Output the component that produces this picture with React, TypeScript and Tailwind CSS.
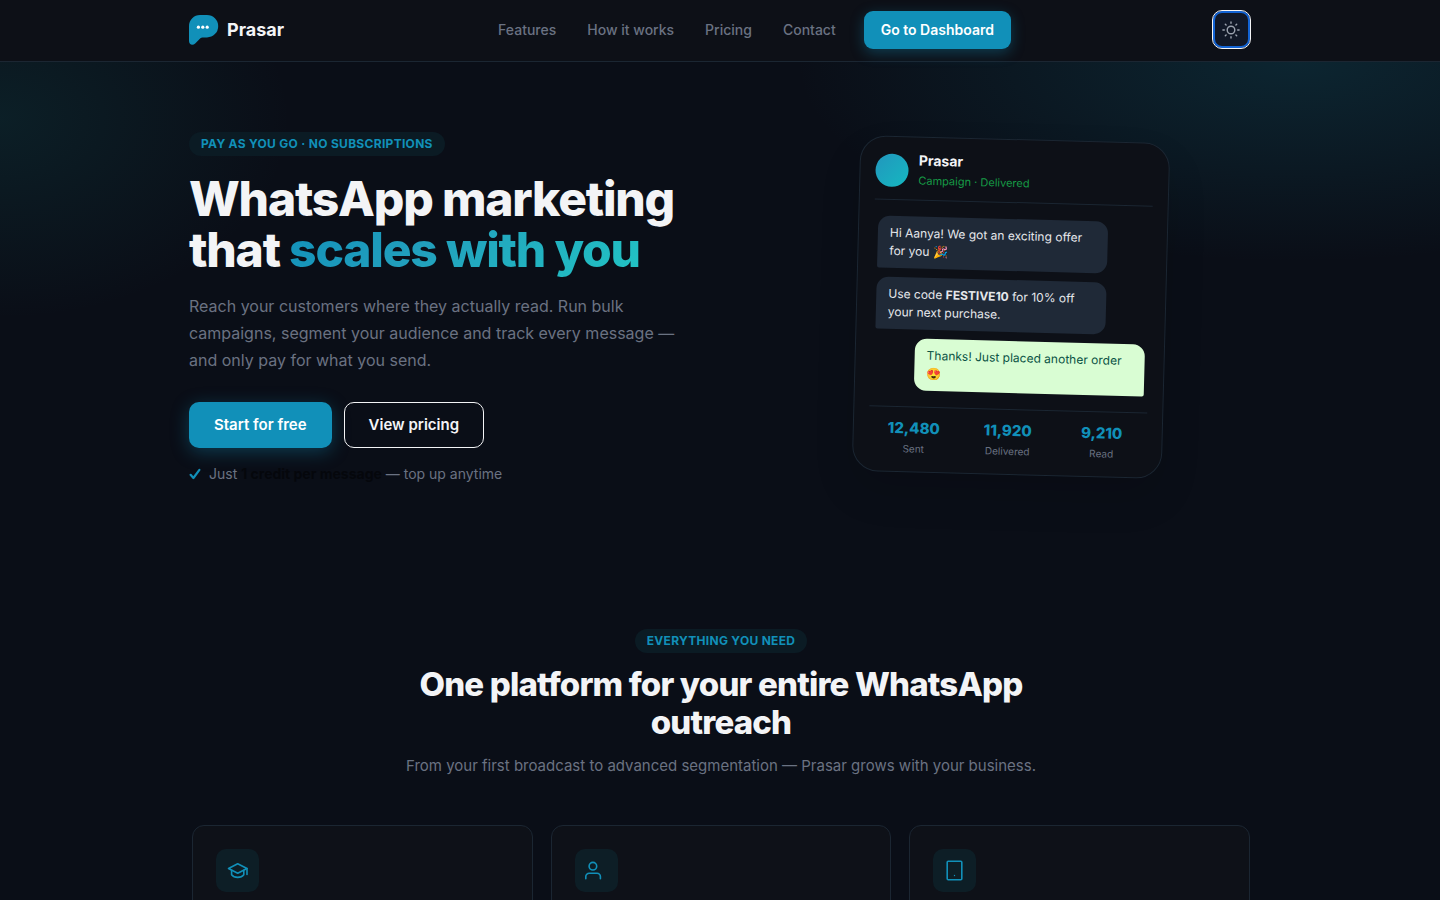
import { useState } from 'react';
import type { ReactNode } from 'react';

const links = [
    { label: 'Features', href: '#features' },
    { label: 'How it works', href: '#how' },
    { label: 'Pricing', href: '#pricing' },
    { label: 'Contact', href: '#contact' },
];

const stats = [
    { value: '12,480', label: 'Sent' },
    { value: '11,920', label: 'Delivered' },
    { value: '9,210', label: 'Read' },
];

function LogoMark() {
    return (
        <svg width="30" height="30" viewBox="0 0 30 30" aria-hidden="true">
            <path d="M11 0H18A11.2 11.2 0 0 1 18 22.4H13.4C12.6 22.4 12 22.7 11.4 23.3L6.2 28.4C3.6 31 0 29.6 0 26V11A11 11 0 0 1 11 0Z" fill="#1190b9" />
            <g fill="#fff">
                <circle cx="9.4" cy="12.2" r="1.6" />
                <circle cx="13.8" cy="12.2" r="1.6" />
                <circle cx="18.2" cy="12.2" r="1.6" />
            </g>
        </svg>
    );
}

function SunIcon() {
    return (
        <svg width="18" height="18" viewBox="0 0 18 18" fill="none" stroke="#9ca3af" strokeWidth="1.4" strokeLinecap="round" aria-hidden="true">
            <circle cx="9" cy="9" r="3.8" />
            <path d="M9 .9V2.3M9 15.7V17.1M.9 9H2.3M15.7 9H17.1M3.3 3.3L4.1 4.1M13.9 13.9L14.7 14.7M3.3 14.7L4.1 13.9M13.9 4.1L14.7 3.3" />
        </svg>
    );
}

function CheckIcon() {
    return (
        <svg width="12" height="12" viewBox="0 0 12 12" fill="none" stroke="#1190b9" strokeWidth="2.2" strokeLinecap="round" strokeLinejoin="round" aria-hidden="true">
            <path d="M1.6 6.8L4.4 10L10.4 1.8" />
        </svg>
    );
}

function FeatureIcon({ children }: { children: ReactNode }) {
    return (
        <div className="flex size-[43px] items-center justify-center rounded-[10px] bg-[#0d1e26]">
            <svg width="22" height="22" viewBox="0 0 22 22" fill="none" stroke="#1190b9" strokeWidth="1.6" strokeLinecap="round" strokeLinejoin="round" aria-hidden="true">
                {children}
            </svg>
        </div>
    );
}

const features = [
    {
        id: 'campaigns',
        icon: (
            <>
                <path d="M1.5 8.5L10.7 3.8L20 8.5L10.7 13.3Z" />
                <path d="M4.6 10.3V14.7C7.2 18.3 14.2 18.3 16.8 14.7V10.3" />
                <path d="M20 8.5V14.5" />
            </>
        ),
    },
    {
        id: 'contacts',
        icon: (
            <>
                <circle cx="7.9" cy="6.2" r="3.8" />
                <path d="M.8 18.8V16.6A3.4 3.4 0 0 1 4.2 13.2H12A3.4 3.4 0 0 1 15.4 16.6V18.8" />
            </>
        ),
    },
    {
        id: 'templates',
        icon: (
            <>
                <rect x="3.2" y="1.2" width="14.6" height="18.6" rx="1" />
                <path d="M10.5 15.5V15.6" strokeWidth="1.4" />
            </>
        ),
    },
];

function Badge({ children }: { children: ReactNode }) {
    return (
        <div className="w-fit rounded-full bg-[#0b1b24] px-3 text-xs/6 font-bold tracking-wide text-[#1190b9] uppercase">
            {children}
        </div>
    );
}

function ChatPreview() {
    return (
        <div className="w-[310px] rotate-[1.5deg] rounded-[26px] border border-[#1b2632] bg-[#0d1017] px-[15px] pt-[15px] pb-[13px] shadow-[0_20px_40px_rgba(0,0,0,0.12)]">
            <div className="flex items-center gap-[10px] border-b border-[#1b2632] pb-[11px]">
                <div className="size-[33px] rounded-full bg-linear-135 from-[#2196bd] to-[#14b8c0]" />
                <div>
                    <div className="text-sm/4 font-bold text-gray-100">Prasar</div>
                    <div className="mt-1 text-[11px]/4 text-[#169c46]">Campaign · Delivered</div>
                </div>
            </div>
            <div className="flex flex-col gap-[9px] px-1 py-4 text-xs/[18px] text-gray-200">
                <div className="w-[230px] rounded-xl rounded-bl-xs bg-[#1f2937] px-3 py-2">
                    Hi Aanya! We got an exciting offer for you 🎉
                </div>
                <div className="w-[230px] rounded-xl rounded-bl-xs bg-[#1f2937] px-3 py-2">
                    Use code <strong className="font-bold">FESTIVE10</strong> for 10% off your next purchase.
                </div>
                <div className="w-[230px] self-end rounded-xl rounded-br-xs bg-[#d9fdd3] px-3 py-2 text-[#0b5345]">
                    Thanks! Just placed another order 😍
                </div>
            </div>
            <div className="grid grid-cols-3 gap-1 border-t border-[#1b2632] pt-[11px] text-center">
                {stats.map((stat) => (
                    <div key={stat.label}>
                        <div className="text-[15px]/5 font-extrabold text-[#1190b9]">{stat.value}</div>
                        <div className="text-[10px]/5 text-gray-500">{stat.label}</div>
                    </div>
                ))}
            </div>
        </div>
    );
}

export default function App() {
    const [dark, setDark] = useState(true);

    return (
        <div className="h-screen overflow-hidden bg-[#0a0e17] font-[Inter,sans-serif] text-gray-100 antialiased">
            <header className="border-b border-[#1b2632] bg-[#0d1017]">
                <div className="mx-auto flex max-w-[1110px] items-center justify-between px-6 pt-[10px] pb-3">
                    <a href="#top" className="flex items-center gap-2 text-lg font-bold">
                        <LogoMark />
                        Prasar
                    </a>
                    <nav className="flex items-center gap-[5px]">
                        {links.map((link) => (
                            <a key={link.label} href={link.href} className="px-[13px] text-sm font-medium text-gray-500">
                                {link.label}
                            </a>
                        ))}
                        <a
                            href="#dashboard"
                            className="ml-[10px] rounded-[9px] bg-[#1190b9] px-[17px] py-[9px] text-sm font-semibold text-white shadow-[0_4px_14px_rgba(17,144,185,0.35)]"
                        >
                            Go to Dashboard
                        </a>
                    </nav>
                    <button
                        type="button"
                        aria-label="Toggle theme"
                        onClick={() => setDark(!dark)}
                        className="flex size-[39px] items-center justify-center rounded-[10px] border border-gray-100 bg-[#111827] shadow-[inset_0_0_0_2px_#1263d4]"
                    >
                        <SunIcon />
                    </button>
                </div>
            </header>

            <section className="bg-[radial-gradient(500px_200px_at_90%_0%,rgba(20,120,140,0.22),transparent),radial-gradient(290px_200px_at_0%_10%,rgba(20,120,120,0.16),transparent)]">
                <div className="mx-auto grid max-w-[1110px] grid-cols-[1fr_480px] gap-10 px-6 pt-[70px] pb-[145px]">
                    <div>
                        <Badge>Pay as you go · No subscriptions</Badge>
                        <h1 className="mt-[17px] text-5xl/[51px] font-extrabold tracking-tight">
                            WhatsApp marketing
                            <br />
                            that{' '}
                            <span className="bg-linear-135 from-[#1190b9] via-[#22a0bd] via-40% to-[#22c4c4] bg-clip-text text-transparent">
                                scales with you
                            </span>
                        </h1>
                        <p className="mt-[18px] max-w-[510px] text-base/[27px] text-gray-500">
                            Reach your customers where they actually read. Run bulk
                            <br />
                            campaigns, segment your audience and track every message —
                            <br />
                            and only pay for what you send.
                        </p>
                        <div className="mt-7 flex gap-3">
                            <a
                                href="#signup"
                                className="rounded-[10px] bg-[#1190b9] px-[25px] py-[11px] text-[15px]/6 font-semibold text-white shadow-[0_4px_18px_rgba(17,144,185,0.35)]"
                            >
                                Start for free
                            </a>
                            <a href="#pricing" className="rounded-[10px] border border-gray-100 px-6 py-[10px] text-[15px]/6 font-semibold">
                                View pricing
                            </a>
                        </div>
                        <p className="mt-4 flex items-center gap-2 text-sm text-gray-500">
                            <CheckIcon />
                            <span>
                                Just <strong className="font-bold text-[#05070c]">1 credit per message</strong> — top up anytime
                            </span>
                        </p>
                    </div>
                    <div className="flex justify-center pt-[7px]">
                        <div>
                            <ChatPreview />
                        </div>
                    </div>
                </div>
            </section>

            <section id="features" className="mx-auto max-w-[1110px] pr-[25px] pl-[27px]">
                <div className="flex flex-col items-center text-center">
                    <Badge>Everything you need</Badge>
                    <h2 className="mt-3 max-w-[640px] text-[33px]/[38px] font-extrabold tracking-tight">
                        One platform for your entire WhatsApp outreach
                    </h2>
                    <p className="mt-[13px] text-[15px]/6 text-gray-500">
                        From your first broadcast to advanced segmentation — Prasar grows with your business.
                    </p>
                </div>
                <div className="mt-[47px] grid grid-cols-3 gap-[18px]">
                    {features.map((feature) => (
                        <div key={feature.id} className="h-[200px] rounded-xl border border-[#1b2632] bg-[#0e1118] p-[23px]">
                            <FeatureIcon>{feature.icon}</FeatureIcon>
                        </div>
                    ))}
                </div>
            </section>
        </div>
    );
}
